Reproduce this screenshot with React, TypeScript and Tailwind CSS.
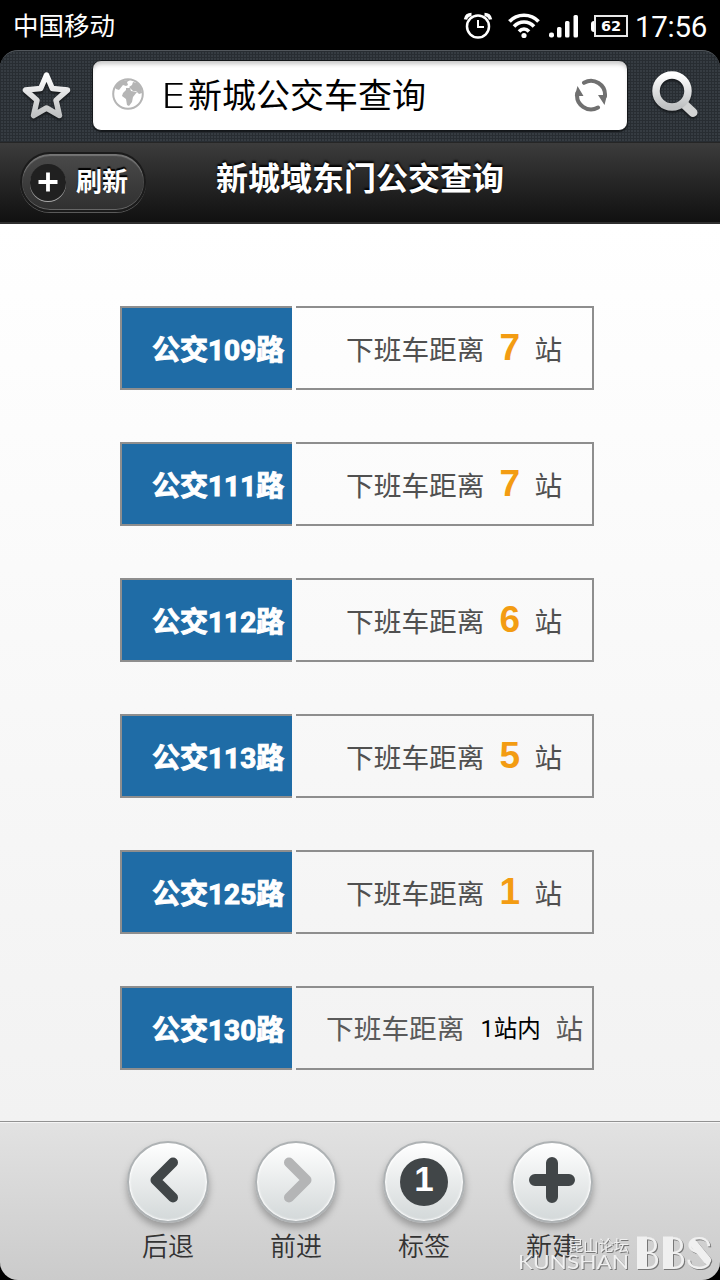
import type { ReactNode } from "react";

const routes = [
  { name: "公交109路", stops: "7" },
  { name: "公交111路", stops: "7" },
  { name: "公交112路", stops: "6" },
  { name: "公交113路", stops: "5" },
  { name: "公交125路", stops: "1" },
  { name: "公交130路", stops: "1站内", near: true },
];

const StatusBar = () => (
  <div className="flex h-[50px] items-center justify-between bg-black pr-3 pl-[13px] text-white">
    <span className="pb-[3px] text-[25.5px] leading-[47px]">中国移动</span>
    <div className="flex items-center pt-[2px]">
      <svg width="30" height="28" viewBox="0 0 30 28" fill="none" stroke="#fff" strokeWidth="2.5">
        <circle cx="15" cy="14.5" r="11" />
        <path d="M15 8v7h6" strokeWidth="2" />
        <path d="M2.500 7.500q1-5 6-5M27.500 7.500q-1-5-6-5" strokeWidth="3.500" />
      </svg>
      <svg className="ml-[15px]" width="32" height="28" viewBox="0 0 32 28" fill="none" stroke="#fff" strokeWidth="3.6">
        <path d="M1.500 9.500C9 1.200 23 1.200 30.500 9.500M6 14.500c5.500-6 14.500-6 20 0M11 19.500c3-3.300 7-3.300 10 0" />
        <circle cx="16" cy="23.500" r="2.600" fill="#fff" stroke="none" />
      </svg>
      <svg className="ml-[9px]" width="30" height="28" viewBox="0 0 30 28" fill="#fff">
        <rect x="0" y="20.500" width="5" height="5" rx="2" />
        <rect x="8" y="15" width="4.500" height="10.500" rx="1.500" />
        <rect x="16" y="9" width="4.500" height="16.500" rx="1.500" />
        <rect x="24.500" y="3" width="4.500" height="22.500" rx="1.500" />
      </svg>
      <div className="ml-3 flex items-center">
        <div className="h-[11px] w-[3px] rounded-l-sm bg-white" />
        <div className="flex h-[22px] w-[34px] items-center justify-center border-[2.500px] border-[#e8e8e8] font-['DejaVu_Sans',sans-serif] text-[14.500px] leading-none font-bold">
          62
        </div>
      </div>
      <span className="ml-[7px] w-[73px] pt-px font-[Roboto,sans-serif] text-[29.500px] leading-[46px] tracking-[-0.3px] whitespace-nowrap">
        17:56
      </span>
    </div>
  </div>
);

const AddressBar = () => (
  <div className="bg-black">
    <div className="flex h-[92px] items-center rounded-t-[18px] border-t border-[#51565b] bg-[#363c42] bg-[linear-gradient(#282d32_1px,transparent_1px),linear-gradient(90deg,#282d32_1px,transparent_1px)] bg-[length:3px_3px] pb-[3px]">
      <svg className="ml-5 drop-shadow-[0_2px_1px_#15181b]" width="53" height="52" viewBox="0 0 53 52">
        <defs>
          <linearGradient id="metal" x1="0" y1="0" x2="0" y2="1">
            <stop offset="0" stopColor="#fff" />
            <stop offset="1" stopColor="#bfc1c2" />
          </linearGradient>
        </defs>
        <path
          d="M26.500 6l5.800 13.500 15.200 1.600-11.500 10.200 3.500 15.200-13-7.500-13 7.500L17 31.300 5.500 21.100l15.200-1.600z"
          fill="none"
          stroke="url(#metal)"
          strokeWidth="5.500"
          strokeLinejoin="round"
        />
      </svg>
      <div className="ml-[19px] flex h-[71px] w-[536px] items-center rounded-[9px] border border-[#14171a] bg-white pr-[19px] pl-[19px] shadow-[inset_0_5px_4px_-2px_#c8c8c8,0_1px_1px_#15181b]">
        <svg className="mb-[2px]" width="32" height="32" viewBox="0 0 32 32">
          <circle cx="16" cy="16" r="14.800" fill="#fff" stroke="#b5b5b5" strokeWidth="2" />
          <path
            d="M3 9Q8 1 18 2l-3 2 1 3-2 1-3-1-4 5-3-1zM14 10l4 0 1 3 6 1-4 5-1 5-3 4-2-1-1-6-4-3 1-3 3-3zM17 9l3-2 1-3 4 1q5 4 5 10l-3 1-3-3-3 0z"
            fill="#b5b5b5"
          />
        </svg>
        <span className="ml-[17px] flex-1 pb-[2px] text-[34px] leading-[50px] whitespace-nowrap text-black">
          <span className="inline-block w-[27px] origin-left scale-x-[1.25] font-['Noto_Sans',sans-serif] text-[35px] font-light">E</span>
          <span>新城公交车查询</span>
        </span>
        <svg width="34" height="34" viewBox="0 0 34 34" fill="none" stroke="#707070" strokeWidth="4" strokeLinecap="round">
          <path d="M10 4.800A14 14 0 0 1 31 18M24 29.500A14 14 0 0 1 3.300 15" />
          <path d="M3.500 8l6 10H.8zM30.500 27l-6.500-10h9z" fill="#707070" stroke="none" />
        </svg>
      </div>
      <svg className="ml-[23px] drop-shadow-[0_2px_1px_#15181b]" width="48" height="50" viewBox="0 0 48 50" fill="none" strokeLinecap="round">
        <path d="M34 35L42 42.500" stroke="#d2d3d3" strokeWidth="9" />
        <circle cx="21" cy="21" r="16" stroke="url(#metal)" strokeWidth="7.500" />
      </svg>
    </div>
  </div>
);

const Header = () => (
  <div className="flex h-[82px] items-start border-t border-b-2 border-t-[#262626] border-b-[#2f2f2f] bg-linear-to-b from-[#3c3c3c] to-[#111] pl-5">
    <div className="mt-[9px] flex h-[60px] w-[126px] items-center rounded-[30px] border-2 border-[#1b1b1b] bg-linear-to-b from-[#4a4a4a] to-[#303030] pl-2 shadow-[inset_0_2px_1px_#757575,inset_0_-1px_0_#666,0_1px_0_#5a5a5a]">
      <div className="flex h-[37px] w-9 items-center justify-center rounded-full bg-[#202020] shadow-[0_1px_0_#aaa]">
        <svg width="20" height="20" viewBox="0 0 20 20" stroke="#fff" strokeWidth="3.800">
          <path d="M10 .5v19M.5 10h19" />
        </svg>
      </div>
      <span className="ml-[10px] pb-[5px] text-[26px] leading-[38px] font-bold text-white [text-shadow:0_-2px_1px_#000]">刷新</span>
    </div>
    <h1 className="ml-[70px] pt-[10px] text-[32px] leading-[46px] font-bold text-white [text-shadow:0_-2px_2px_#000]">
      新城域东门公交查询
    </h1>
  </div>
);

const RouteRow = ({ name, stops, near }: { name: string; stops: string; near?: boolean }) => (
  <div className="flex h-[84px] gap-1">
    <div className="flex w-[172px] items-center border-2 border-r-0 border-[#8e8e8e] bg-[#1f6ca6] pl-[30px] font-[Roboto,'Noto_Sans_CJK_SC',sans-serif] text-[28px] font-bold whitespace-nowrap text-white [-webkit-text-stroke:1px_#fff]">
      <span className="pt-[5px]">{name}</span>
    </div>
    <div
      className={
        near
          ? "flex w-[298px] items-center border-2 border-l-0 border-[#8e8e8e] pl-[30px]"
          : "flex w-[298px] items-center border-2 border-l-0 border-[#8e8e8e] pl-[50px]"
      }
    >
      <span className={near ? "pb-px text-[27.700px] text-[#5a5a5a]" : "pt-[2px] text-[27.700px] text-[#505050]"}>下班车距离</span>
      {near ? (
        <span className="ml-4 w-[75px] pt-[3px] font-[Roboto,'Noto_Sans_CJK_SC',sans-serif] text-[23.500px] whitespace-nowrap text-black">
          {stops}
        </span>
      ) : (
        <span className="ml-[15px] w-[35px] font-['Liberation_Sans',sans-serif] text-[37px] leading-[50px] font-bold text-[#f39c12]">
          {stops}
        </span>
      )}
      <span className={near ? "pb-px text-[27.700px] text-[#5a5a5a]" : "pt-[2px] text-[27.700px] text-[#505050]"}>站</span>
    </div>
  </div>
);

const NavButton = ({ label, children }: { label: string; children: ReactNode }) => (
  <div className="flex w-32 flex-col items-center">
    <div className="flex h-[82px] w-[82px] items-center justify-center rounded-full border-2 border-[#aeb2b4] bg-linear-to-b from-white to-[#d3d8d9] shadow-[inset_0_0_2px_1px_#fff,0_5px_7px_#9b9b9b]">
      {children}
    </div>
    <span className="mt-[2px] text-[26px] leading-[40px] font-[350] text-[#333]">{label}</span>
  </div>
);

// forum stamp in the corner
const Watermark = () => (
  <svg className="absolute right-0 bottom-0 overflow-visible" width="210" height="50" viewBox="0 0 210 50" fill="#f0f0f0">
    <g className="drop-shadow-[1px_1px_0_#777]">
      <text x="58" y="21" fontSize="15" textLength="61" lengthAdjust="spacingAndGlyphs" fontFamily="Noto Sans CJK SC, sans-serif">
        昆山论坛
      </text>
      <text x="8" y="39" fontSize="19" textLength="111" lengthAdjust="spacingAndGlyphs" fontFamily="Lato, sans-serif">
        KUNSHAN
      </text>
      <text x="123 149 175.5" y="38.500" fontSize="45" fontWeight="300" fontFamily="Roboto, sans-serif">
        BBS
      </text>
      <path d="M127 6.500h10v32h-10zM153 6.500h10v32h-10z" />
      <path d="M184 14l13 16" stroke="#f0f0f0" strokeWidth="8" strokeLinecap="round" />
    </g>
  </svg>
);

const App = () => {
  return (
    <div className="h-[1280px] w-[720px] overflow-hidden bg-black font-['Noto_Sans_CJK_SC',sans-serif]">
      <StatusBar />
      <AddressBar />
      <Header />
      <main className="flex h-[897px] flex-col gap-[52px] bg-linear-to-b from-white to-[#f2f2f2] pt-[82px] pl-[120px]">
        {routes.map((route) => (
          <RouteRow key={route.name} {...route} />
        ))}
      </main>
      <nav className="relative flex h-[159px] justify-center rounded-b-[18px] border-t border-[#929292] bg-linear-to-b from-[#e2e2e2] to-[#cbcbcb] pt-[19px] shadow-[inset_0_1px_0_#f5f5f5]">
        <NavButton label="后退">
          <svg width="44" height="50" viewBox="0 0 44 50" fill="none" stroke="#414648" strokeWidth="10" strokeLinecap="round" strokeLinejoin="round">
            <path d="M27 5.500L9.500 23 27 40.500" />
          </svg>
        </NavButton>
        <NavButton label="前进">
          <svg width="44" height="50" viewBox="0 0 44 50" fill="none" stroke="#b4b5b6" strokeWidth="10" strokeLinecap="round" strokeLinejoin="round">
            <path d="M15 5.500L32.500 23 15 40.500" />
          </svg>
        </NavButton>
        <NavButton label="标签">
          <div className="flex h-12 w-12 items-center justify-center rounded-full bg-[#414648] pb-[7px] font-['Liberation_Sans',sans-serif] text-[35px] leading-none font-bold text-white">
            1
          </div>
        </NavButton>
        <NavButton label="新建">
          <svg width="46" height="50" viewBox="0 0 46 50" stroke="#414648" strokeWidth="12" strokeLinecap="round">
            <path d="M23 6v34M6 23h34" />
          </svg>
        </NavButton>
        <Watermark />
      </nav>
    </div>
  );
};

export default App;
